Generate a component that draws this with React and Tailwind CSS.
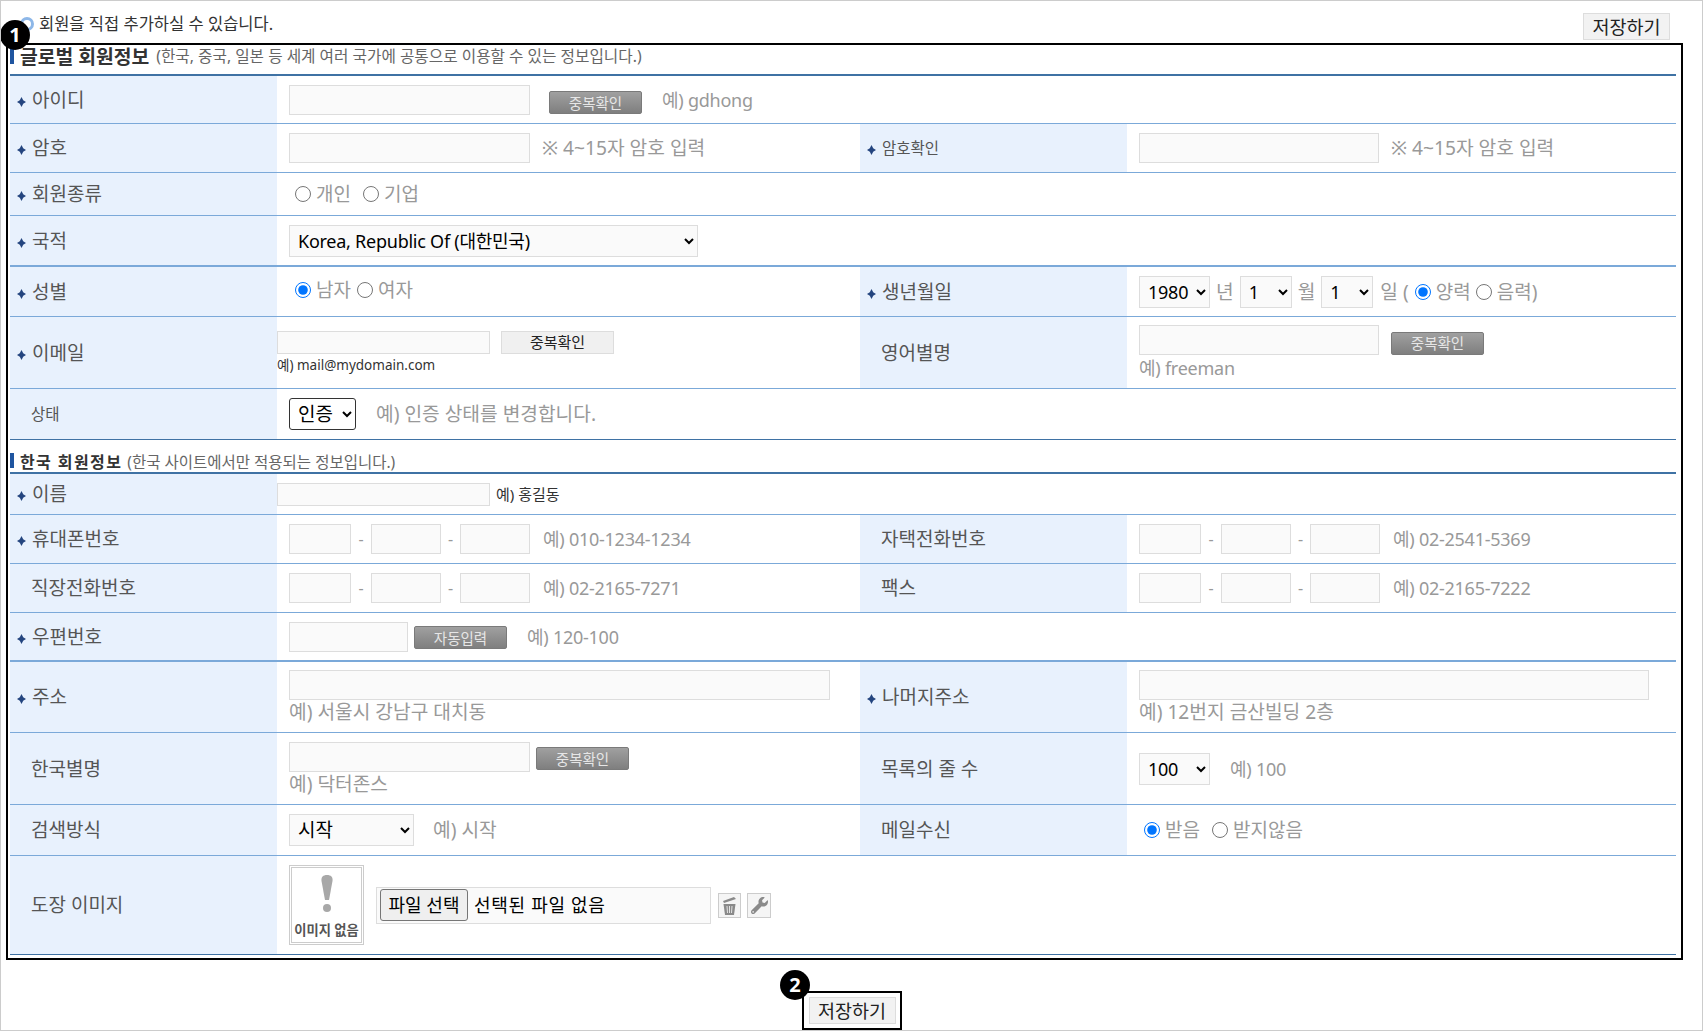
import React from 'react'
import { FaWrench } from 'react-icons/fa'

const FONT = "font-['Noto_Sans','Noto_Sans_CJK_KR',sans-serif]"

function Bullet() {
  return (
    <svg width="9" height="10" viewBox="0 0 9 10" className="absolute left-[7px] top-1/2 -translate-y-[3px]">
      <path d="M4.5 0 L6.2 3.2 L9 5 L6.2 6.8 L4.5 10 L2.8 6.8 L0 5 L2.8 3.2 Z" fill="#24457f" />
    </svg>
  )
}

function Label({ children, req, small }) {
  return (
    <div className={`relative flex items-center bg-[#e8f1fd] text-[#555] ${req ? 'pl-[22px]' : 'pl-[21px]'} ${small ? 'text-[15.5px]' : 'text-[19px]'}`}>
      {req && <Bullet />}
      <span className="leading-6">{children}</span>
    </div>
  )
}

function Cell({ children, span, col, flush }) {
  const base = flush ? 'pl-0' : 'pl-3'
  const layout = col ? 'flex flex-col items-start justify-center' : 'flex items-center'
  return <div className={`${base} ${layout} ${span ? 'col-span-3' : ''}`}>{children}</div>
}

function Row({ h, line = 'border-b border-[#7ba9d9]', children }) {
  return (
    <div className={`grid grid-cols-[267px_583px_267px_1fr] ${h} ${line}`}>{children}</div>
  )
}

function Box({ w = 'w-[241px]', h = 'h-[30px]' }) {
  return <input type="text" className={`${w} ${h} border border-[#ddd] bg-[#fafafa] shrink-0`} />
}

function GrayBtn({ children, ml = 'ml-[19px]', mt = '' }) {
  return (
    <button className={`w-[93px] ${ml} ${mt} h-[23px] shrink-0 rounded-[2px] border border-[#7a7a7a] bg-linear-to-b from-[#a0a0a0] to-[#7f7f7f] text-[14.5px] leading-5 text-[#e6e6e6]`}>
      {children}
    </button>
  )
}

// latin hints sit a little tighter than the hangul ones in the reference
function Hint({ children, latin, className = '' }) {
  const size = latin ? 'text-[18px] tracking-[-0.25px]' : 'text-[19.2px]'
  return <span className={`${size} leading-6 text-[#999] whitespace-nowrap ${className}`}>{children}</span>
}

function Radio({ name, checked, label, className = '' }) {
  return (
    <label className={`flex items-center text-[19px] leading-6 text-[#999] ${className}`}>
      <input type="radio" name={name} defaultChecked={checked} className="w-4 h-4 m-0 mr-[5px]" />
      {label}
    </label>
  )
}

function Phone({ example }) {
  return (
    <>
      <Box w="w-[62px]" />
      <span className="w-[20px] text-center text-[#999]">-</span>
      <Box w="w-[70px]" />
      <span className="w-[19px] text-center text-[#999]">-</span>
      <Box w="w-[70px]" />
      <Hint latin className="ml-[13px]">{example}</Hint>
    </>
  )
}

function Pick({ w, dark, big, options }) {
  const text = big ? 'text-[19px]' : 'text-[18px] tracking-[-0.25px]'
  return (
    <select className={`${w} h-[32px] shrink-0 pl-[4px] ${text} text-black ${dark ? 'rounded-[3px] border border-[#333] bg-white' : 'border border-[#ddd] bg-[#fafafa]'}`}>
      {options.map((o) => <option key={o}>{o}</option>)}
    </select>
  )
}

function Badge({ n, className }) {
  return (
    <div className={`absolute flex h-[30px] w-[30px] items-center justify-center rounded-full bg-black text-[20px] font-bold leading-none text-white ${className}`}>
      {n}
    </div>
  )
}

export default function App() {
  return (
    <div className={`relative flex h-[1031px] flex-col overflow-hidden border border-[#ccc] bg-white ${FONT}`}>
      {/* Top bar */}
      <div className="flex h-[42px] shrink-0 items-start justify-between">
        <div className="ml-[19px] mt-[13px] flex items-center">
          <span className="h-[14px] w-[14px] rounded-full border-[3px] border-[#8db7e8] bg-white" />
          <span className="ml-[5px] text-[16.5px] leading-5 text-[#333]">회원을 직접 추가하실 수 있습니다.</span>
        </div>
        <button className="mr-[32px] mt-[12px] h-[27px] w-[87px] border border-[#ddd] bg-[#f2f2f2] text-[18.5px] leading-6 text-[#222]">저장하기</button>
      </div>

      {/* Form */}
      <div className="ml-[5px] w-[1677px] shrink-0 border-2 border-black pb-[3px] pl-[2px] pr-[5px]">
        <div className="flex h-[31px] items-start border-b-2 border-[#3f72a4]">
          <span className="mt-[3px] h-[16px] w-1 bg-[#1f55a0]" />
          <span className="ml-[6px] text-[19.3px] font-bold leading-6 text-[#333]">글로벌 회원정보</span>
          <span className="ml-[7px] mt-[1px] text-[15.7px] leading-5 text-[#666]">(한국, 중국, 일본 등 세계 여러 국가에 공통으로 이용할 수 있는 정보입니다.)</span>
        </div>

        <Row h="h-[48px]">
          <Label req>아이디</Label>
          <Cell span>
            <Box />
            <GrayBtn mt="mt-[6px]">중복확인</GrayBtn>
            <Hint latin className="ml-[20px]">예) gdhong</Hint>
          </Cell>
        </Row>

        <Row h="h-[49px]">
          <Label req>암호</Label>
          <Cell>
            <Box />
            <Hint className="ml-[12px]">※ 4~15자 암호 입력</Hint>
          </Cell>
          <Label req small>암호확인</Label>
          <Cell>
            <Box w="w-[240px]" />
            <Hint className="ml-[12px]">※ 4~15자 암호 입력</Hint>
          </Cell>
        </Row>

        <Row h="h-[43px]">
          <Label req>회원종류</Label>
          <Cell span>
            <Radio name="kind" label="개인" className="ml-[6px]" />
            <Radio name="kind" label="기업" className="ml-[12px]" />
          </Cell>
        </Row>

        <Row h="h-[51px]" line="border-b-2 border-[#7ba9d9]">
          <Label req>국적</Label>
          <Cell span>
            <Pick w="w-[409px]" options={['Korea, Republic Of (대한민국)']} />
          </Cell>
        </Row>

        <Row h="h-[50px]">
          <Label req>성별</Label>
          <Cell>
            <Radio name="sex" checked label="남자" className="mb-[3px] ml-[6px]" />
            <Radio name="sex" label="여자" className="mb-[3px] ml-[6px]" />
          </Cell>
          <Label req>생년월일</Label>
          <Cell>
            <Pick w="w-[71px]" options={['1980']} />
            <Hint className="mx-[6px]">년</Hint>
            <Pick w="w-[52px]" options={['1']} />
            <Hint className="mx-[6px]">월</Hint>
            <Pick w="w-[52px]" options={['1']} />
            <Hint className="ml-[7px] mr-[6px]">일 (</Hint>
            <Radio name="cal" checked label="양력" />
            <Radio name="cal" label="음력)" className="ml-[5px]" />
          </Cell>
        </Row>

        <Row h="h-[72px]">
          <Label req>이메일</Label>
          <Cell col flush>
            <div className="flex items-start">
              <Box w="w-[213px]" h="h-[23px]" />
              <button className="ml-[11px] h-[23px] w-[113px] border border-[#ddd] bg-[#f0f0f0] text-[15px] leading-5 text-[#222]">중복확인</button>
            </div>
            <span className="mt-[1px] text-[13.5px] leading-5 text-[#333]">예) mail@mydomain.com</span>
          </Cell>
          <Label>영어별명</Label>
          <Cell col>
            <div className="flex items-center">
              <Box w="w-[240px]" />
              <GrayBtn ml="ml-[12px]" mt="mt-[6px]">중복확인</GrayBtn>
            </div>
            <Hint latin className="mt-[1px]">예) freeman</Hint>
          </Cell>
        </Row>

        <Row h="h-[51px]" line="border-b border-[#3f72a4]">
          <Label small>상태</Label>
          <Cell span>
            <Pick w="w-[67px]" dark big options={['인증']} />
            <Hint className="ml-[20px]">예) 인증 상태를 변경합니다.</Hint>
          </Cell>
        </Row>

        <div className="flex h-[34px] items-end border-b-2 border-[#3f72a4]">
          <span className="mb-[4px] h-[15px] w-1 bg-[#1f55a0]" />
          <span className="ml-[6px] text-[16px] font-bold leading-5 tracking-[1.4px] text-[#333]">한국 회원정보</span>
          <span className="ml-[5px] text-[15.5px] leading-5 text-[#666]">(한국 사이트에서만 적용되는 정보입니다.)</span>
        </div>

        <Row h="h-[41px]">
          <Label req>이름</Label>
          <Cell span flush>
            <Box w="w-[213px]" h="h-[23px]" />
            <span className="ml-[6px] text-[15px] leading-5 text-[#333]">예) 홍길동</span>
          </Cell>
        </Row>

        <Row h="h-[49px]">
          <Label req>휴대폰번호</Label>
          <Cell><Phone example="예) 010-1234-1234" /></Cell>
          <Label>자택전화번호</Label>
          <Cell><Phone example="예) 02-2541-5369" /></Cell>
        </Row>

        <Row h="h-[49px]">
          <Label>직장전화번호</Label>
          <Cell><Phone example="예) 02-2165-7271" /></Cell>
          <Label>팩스</Label>
          <Cell><Phone example="예) 02-2165-7222" /></Cell>
        </Row>

        <Row h="h-[49px]" line="border-b-2 border-[#7ba9d9]">
          <Label req>우편번호</Label>
          <Cell span>
            <Box w="w-[119px]" />
            <GrayBtn ml="ml-[6px]" mt="mt-[2px]">자동입력</GrayBtn>
            <Hint latin className="ml-[20px]">예) 120-100</Hint>
          </Cell>
        </Row>

        <Row h="h-[71px]">
          <Label req>주소</Label>
          <Cell col>
            <Box w="w-[541px]" />
            <Hint>예) 서울시 강남구 대치동</Hint>
          </Cell>
          <Label req>나머지주소</Label>
          <Cell col>
            <Box w="w-[510px]" />
            <Hint>예) 12번지 금산빌딩 2층</Hint>
          </Cell>
        </Row>

        <Row h="h-[72px]">
          <Label>한국별명</Label>
          <Cell col>
            <div className="flex items-center">
              <Box />
              <GrayBtn ml="ml-[6px]" mt="mt-[4px]">중복확인</GrayBtn>
            </div>
            <Hint>예) 닥터존스</Hint>
          </Cell>
          <Label>목록의 줄 수</Label>
          <Cell>
            <Pick w="w-[71px]" options={['100']} />
            <Hint latin className="ml-[20px]">예) 100</Hint>
          </Cell>
        </Row>

        <Row h="h-[51px]">
          <Label>검색방식</Label>
          <Cell>
            <Pick w="w-[125px]" big options={['시작']} />
            <Hint className="ml-[19px]">예) 시작</Hint>
          </Cell>
          <Label>메일수신</Label>
          <Cell>
            <Radio name="mail" checked label="받음" className="ml-[5px]" />
            <Radio name="mail" label="받지않음" className="ml-[12px]" />
          </Cell>
        </Row>

        <Row h="h-[99px]" line="border-b border-[#3f72a4]">
          <Label>도장 이미지</Label>
          <Cell span>
            <div className="flex h-[80px] w-[75px] shrink-0 flex-col items-center border-[3px] border-double border-[#ccc] bg-white">
              <svg width="16" height="38" viewBox="0 0 16 38" className="mt-[7px]">
                <path d="M8 0 C12 0 14 2 13.5 6 L10 25 L6 25 L2.5 6 C2 2 4 0 8 0 Z" fill="#a8a8a8" />
                <circle cx="8" cy="33" r="4" fill="#a8a8a8" />
              </svg>
              <span className="mt-[9px] whitespace-nowrap text-[13.3px] font-bold leading-4 text-[#555]">이미지 없음</span>
            </div>
            <div className="ml-[12px] flex h-[37px] w-[335px] items-center border border-[#ddd] bg-[#fafafa] pl-[3px] text-[18px] text-black">
              <button className="h-[32px] w-[88px] rounded-[3px] border border-[#767676] bg-[#efefef] leading-6">파일 선택</button>
              <span className="ml-[6px] leading-6 tracking-[0.7px]">선택된 파일 없음</span>
            </div>
            <div className="ml-[7px] flex h-[25px] w-[23px] items-center justify-center border border-[#ccc] bg-[#f5f5f5]">
              <svg width="15" height="19" viewBox="0 0 15 19">
                <path d="M1 5 L12 1 L14 3 L2 7 Z" fill="#8a8a8a" />
                <path d="M1.5 8 H13.5 L12 19 H3 Z" fill="#8a8a8a" />
                <path d="M5 10 L5.5 17 M7.5 10 V17 M10 10 L9.5 17" stroke="#e4e4e4" strokeWidth="1" />
              </svg>
            </div>
            <div className="ml-[6px] flex h-[25px] w-[24px] items-center justify-center border border-[#ccc] bg-[#f5f5f5]">
              <FaWrench size={17} color="#8a8a8a" />
            </div>
          </Cell>
        </Row>
      </div>

      {/* Bottom save */}
      <div className="ml-[801px] mt-[31px] flex h-[39px] w-[100px] shrink-0 items-center justify-center border-2 border-black">
        <button className="h-[27px] w-[87px] border border-[#ddd] bg-[#f2f2f2] text-[18.5px] leading-6 text-[#222]">저장하기</button>
      </div>

      <Badge n="1" className="left-[-1px] top-[19px]" />
      <Badge n="2" className="left-[779px] top-[969px]" />
    </div>
  )
}
